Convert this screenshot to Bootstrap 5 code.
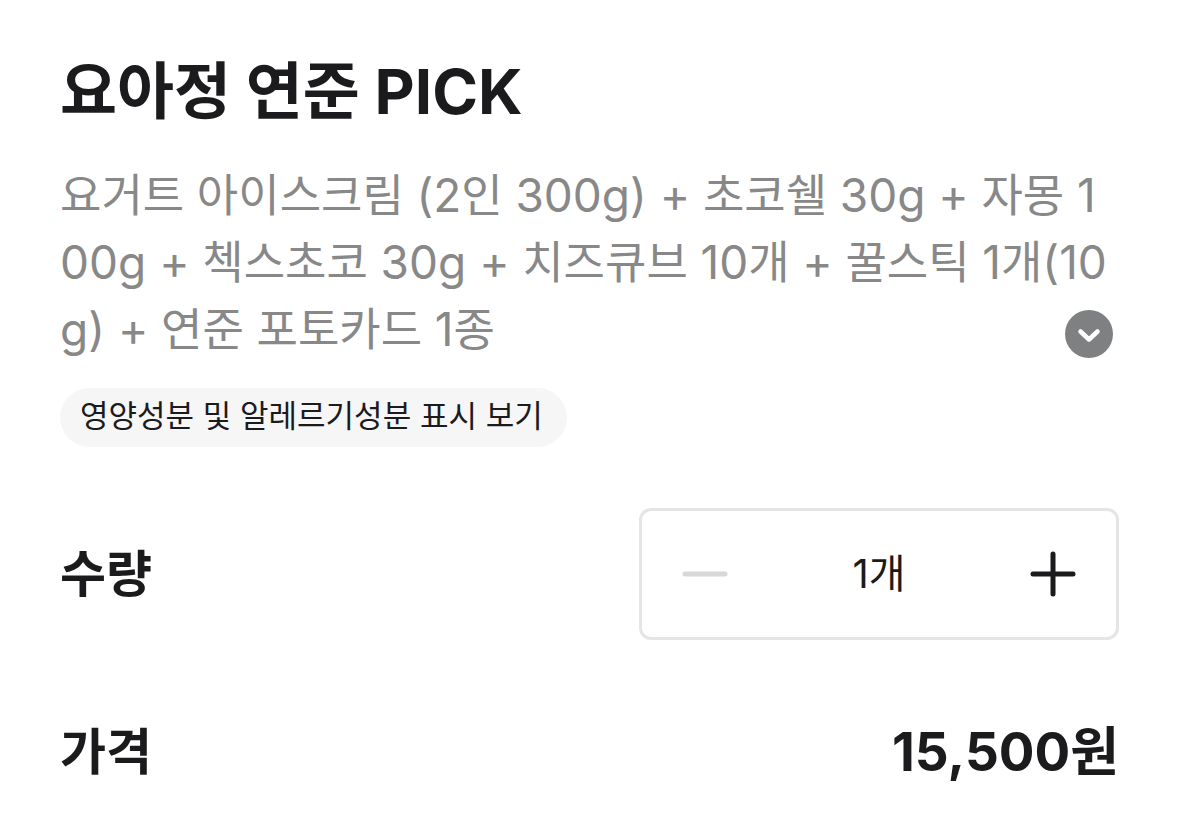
<!DOCTYPE html>
<html lang="ko">
<head>
<meta charset="utf-8">
<meta name="viewport" content="width=device-width, initial-scale=1">
<title>요아정 연준 PICK</title>
<link href="https://cdn.jsdelivr.net/npm/bootstrap@5.3.0/dist/css/bootstrap.min.css" rel="stylesheet">
<style>
body { font-family: Inter, "Noto Sans CJK KR", sans-serif; color: #1b1b1d; background: #fff; }
.product { padding: 48px 60px 36px; }
.product-name { font-size: 62px; line-height: 88px; font-weight: 700; }
.product-desc { font-size: 45px; line-height: 67px; color: #888; padding-top: 26px; word-break: break-all; }
/* Latin letters and digits run slightly larger than the Hangul beside them */
.latin { font-size: 46px; }
.more-btn { width: 48px; height: 48px; right: 6px; bottom: 5px; }
.nutrition-btn { font-size: 31px; line-height: 46px; padding: 5px 24px 8px 20px; background: #f6f6f6; margin-top: 25px; color: #1b1b1d; }
.qty-row { margin-top: 61px; }
.row-label { font-size: 50px; line-height: 72px; font-weight: 700; }
.stepper { width: 480px; height: 132px; border: 3px solid #e5e5e5; border-radius: 12px; padding: 0 38px; }
.step-btn { width: 50px; height: 50px; }
.step-value { font-size: 40px; line-height: 60px; }
.price-row { margin-top: 76px; }
.price { font-size: 53px; line-height: 72px; font-weight: 700; }
</style>
</head>
<body>
<main class="product">
<h1 class="product-name mb-0">요아정 연준 PICK</h1>
<div class="position-relative">
<p class="product-desc mb-0"><span>요거트 아이스크림</span> <span class="latin">(2</span><span>인</span> <span class="latin">300g) +</span> <span>초코쉘</span> <span class="latin">30g +</span> <span>자몽</span> <span class="latin">1</span><span class="latin">00g +</span> <span>첵스초코</span> <span class="latin">30g +</span> <span>치즈큐브</span> <span class="latin">10</span><span>개</span> <span class="latin">+</span> <span>꿀스틱</span> <span class="latin">1</span><span>개</span><span class="latin">(10</span><span class="latin">g) +</span> <span>연준 포토카드</span> <span class="latin">1</span><span>종</span></p>
<button type="button" class="more-btn btn p-0 border-0 position-absolute d-flex" aria-label="더보기"><svg width="48" height="48" viewBox="0 0 48 48" fill="none"><circle cx="24" cy="24" r="24" fill="#7f8081"/><path d="M15.500 21.500l8.500 8 8.500-8" stroke="#fff" stroke-width="4.500" stroke-linecap="round" stroke-linejoin="round"/></svg></button>
</div>
<button type="button" class="nutrition-btn btn border-0 rounded-pill">영양성분 및 알레르기성분 표시 보기</button>
<section class="qty-row d-flex align-items-center justify-content-between">
<h2 class="row-label mb-0">수량</h2>
<div class="stepper d-flex align-items-center justify-content-between">
<button type="button" class="step-btn btn p-0 border-0 d-flex opacity-100" aria-label="수량 줄이기" disabled><svg width="50" height="50" viewBox="0 0 50 50"><path d="M5 25H45" stroke="#d7d8d9" stroke-width="5" stroke-linecap="round"/></svg></button>
<output class="step-value">1개</output>
<button type="button" class="step-btn btn p-0 border-0 d-flex" aria-label="수량 늘리기"><svg width="50" height="50" viewBox="0 0 50 50"><path d="M5 25H45M25 5V45" stroke="#1b1b1d" stroke-width="5" stroke-linecap="round"/></svg></button>
</div>
</section>
<section class="price-row d-flex align-items-center justify-content-between">
<h2 class="row-label mb-0">가격</h2>
<span class="price">15,500원</span>
</section>
</main>
<script src="https://cdn.jsdelivr.net/npm/bootstrap@5.3.0/dist/js/bootstrap.bundle.min.js"></script>
</body>
</html>
